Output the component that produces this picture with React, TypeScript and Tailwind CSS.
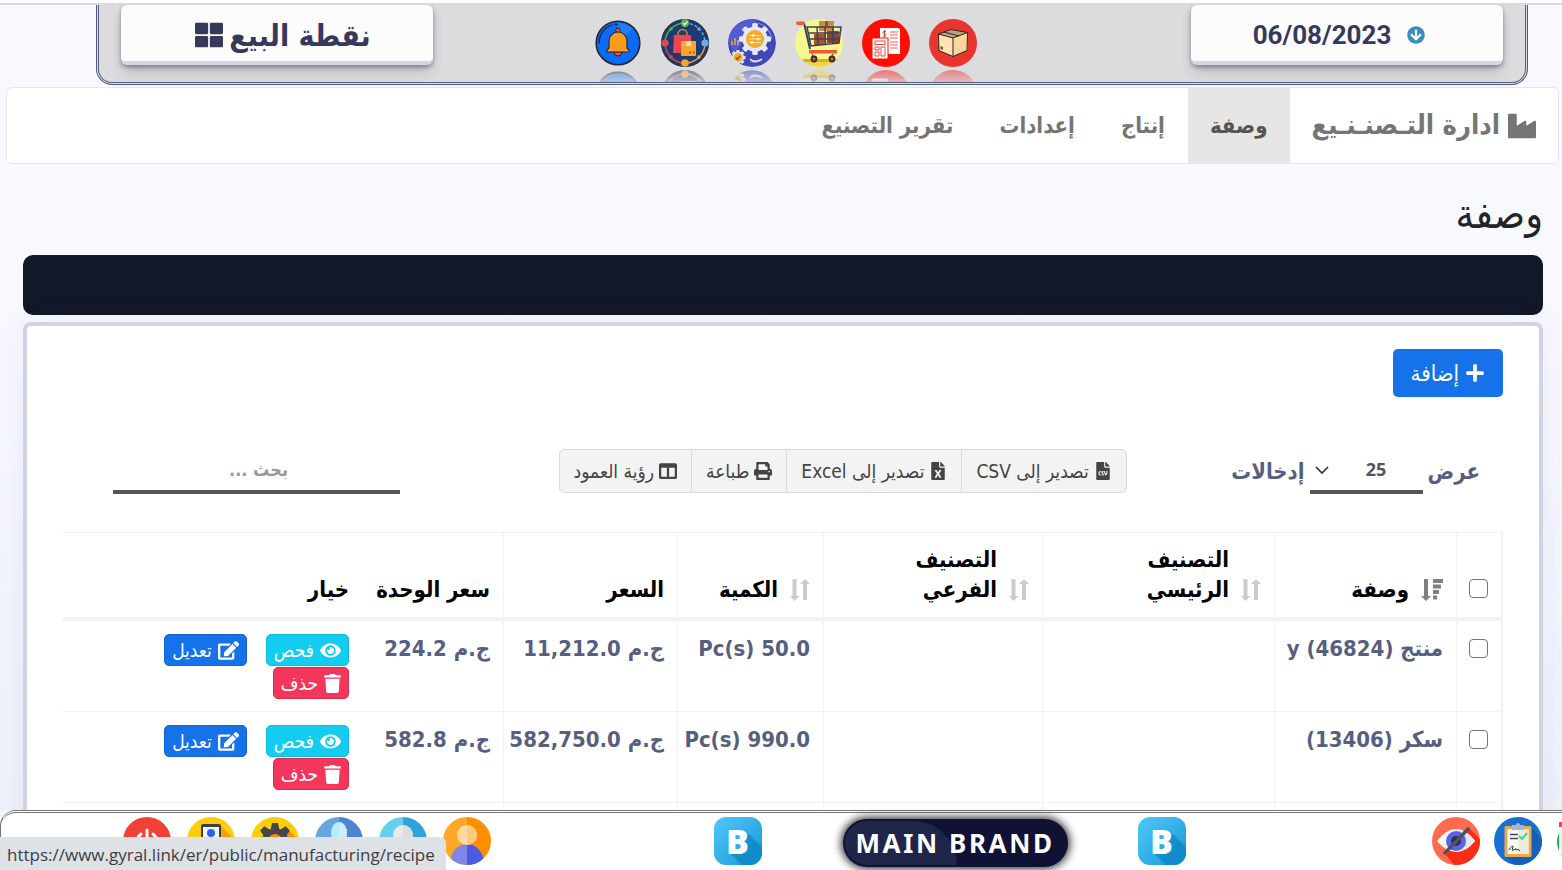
import type { ReactNode } from "react";
import {
  FaIndustry,
  FaThLarge,
  FaPlus,
  FaFileCsv,
  FaFileExcel,
  FaPrint,
  FaColumns,
  FaEye,
  FaEdit,
  FaTrash,
  FaArrowCircleDown,
} from "react-icons/fa";

function Disc({ id, children }: { id: string; children: ReactNode }) {
  return (
    <svg viewBox="0 0 48 48" className="block size-12" aria-hidden="true">
      <clipPath id={id}>
        <circle cx="24" cy="24" r="24" />
      </clipPath>
      <g clipPath={`url(#${id})`}>{children}</g>
    </svg>
  );
}

function BellIcon() {
  return (
    <svg viewBox="0 0 48 48" className="block size-12" aria-hidden="true">
      <circle cx="24" cy="24" r="21.8" fill="#0a6cf5" stroke="#26262e" strokeWidth="1.6" />
      <path d="M24 3 L39 9 L24 24 Z" fill="#2b8bff" opacity=".6" />
      <path d="M5 24 A19 19 0 0 1 18 6" fill="none" stroke="#15223f" strokeWidth="1.3" strokeLinecap="round" />
      <path d="M21 5.3 h2.5" stroke="#15223f" strokeWidth="1.3" strokeLinecap="round" />
      <circle cx="24" cy="11.5" r="2.3" fill="#f0564a" stroke="#26262e" strokeWidth="1" />
      <path d="M20 33 a4 4 0 0 0 8 0z" fill="#f0564a" stroke="#26262e" strokeWidth="1" />
      <path
        d="M15 29 v-7 a9 9 0 0 1 18 0 v7 l2 2 a1.2 1.2 0 0 1 -1 2 H14 a1.2 1.2 0 0 1 -1 -2z"
        fill="#ff9a1a"
        stroke="#26262e"
        strokeWidth="1.2"
      />
    </svg>
  );
}

function ShopCycleIcon() {
  return (
    <Disc id="shop-cycle">
      <circle cx="24" cy="24" r="24" fill="#1d3a73" />
      <circle cx="24" cy="24" r="24" fill="none" stroke="#26385a" strokeWidth="4" />
      <path d="M4 24 A20 20 0 0 1 24 4" fill="none" stroke="#53b04c" strokeWidth="1.4" />
      <path d="M24 4 A20 20 0 0 1 44 24" fill="none" stroke="#6aa8f0" strokeWidth="1.4" strokeDasharray="3 2" />
      <path d="M44 24 A20 20 0 0 1 24 44" fill="none" stroke="#f2a33a" strokeWidth="1.4" />
      <path d="M24 44 A20 20 0 0 1 4 24" fill="none" stroke="#e04a4a" strokeWidth="1.4" />
      <circle cx="24" cy="4" r="4.2" fill="#53b04c" />
      <path d="M22 4 l1.6 1.7 3-3.2" fill="none" stroke="#fff" strokeWidth="1.3" />
      <circle cx="44" cy="24" r="3.6" fill="#6aa8f0" />
      <circle cx="24" cy="44" r="3.8" fill="#f2a33a" />
      <circle cx="4" cy="24" r="3.6" fill="#e04a4a" />
      <circle cx="10" cy="10" r="1.8" fill="#53b04c" />
      <circle cx="38" cy="10" r="1.8" fill="#6aa8f0" />
      <circle cx="38" cy="38" r="1.8" fill="#f2a33a" />
      <circle cx="10" cy="38" r="1.8" fill="#e04a4a" />
      <path d="M17 17 v-2 a4.5 4.5 0 0 1 9 0 v2" fill="none" stroke="#d98a3a" strokeWidth="1.4" />
      <path d="M13 16 H30 L31 34 H12z" fill="#f0454e" />
      <rect x="20" y="22" width="15" height="15" rx="1" fill="#fba62e" />
      <rect x="25" y="22" width="5" height="5" fill="#ffe0a0" />
      <path d="M28 33.5 h2 M32 33.5 h1.5" stroke="#9b5c12" strokeWidth="2" />
    </Disc>
  );
}

function GearsIcon() {
  const spokes = [0, 45, 90, 135];
  return (
    <Disc id="gears">
      <circle cx="24" cy="24" r="24" fill="#4048b8" />
      <path d="M0 20 A24 24 0 0 1 24 0 L30 0 L6 36z" fill="#525bd0" />
      <path d="M30 4 a20 20 0 0 1 14 16 M22 42 q5 3 12 -1" fill="none" stroke="#7f88ea" strokeWidth="1.2" />
      <path d="M22 40 l3 2 q5 1 9 -2" fill="none" stroke="#fff" strokeWidth="1.4" />
      {spokes.map((a) => (
        <rect key={a} x="24.2" y="4" width="5.6" height="32" rx="1.5" fill="#e4e8f2" transform={`rotate(${a} 27 20)`} />
      ))}
      <circle cx="27" cy="20" r="12.6" fill="#e4e8f2" />
      <circle cx="27" cy="20" r="9" fill="#f9a825" />
      <path d="M21 16.5 h12 M21 20 h12 M21 23.5 h12" stroke="#ffe6b0" strokeWidth="1.1" />
      <circle cx="25" cy="16.5" r="1.4" fill="#fff3d6" />
      <circle cx="30" cy="20" r="1.4" fill="#fff3d6" />
      <circle cx="24" cy="23.5" r="1.4" fill="#fff3d6" />
      <path d="M4 26 v-4 M7 26 v-7 M10 26 v-5" stroke="#f3b45a" strokeWidth="1.4" />
      {spokes.map((a) => (
        <rect key={a} x="8.4" y="31" width="3.2" height="15" fill="#dfe3ee" transform={`rotate(${a} 10 38.5)`} />
      ))}
      <circle cx="10" cy="38.5" r="6" fill="#dfe3ee" />
      <circle cx="10" cy="38.5" r="4.4" fill="#f9a825" />
      <path d="M7.7 38.5 l1.7 1.8 3-3.6" fill="none" stroke="#7c4a0e" strokeWidth="1.2" />
    </Disc>
  );
}

function CartIcon() {
  return (
    <svg viewBox="0 0 48 48" className="block size-12" aria-hidden="true">
      <clipPath id="cart">
        <circle cx="24" cy="24" r="24" />
      </clipPath>
      <g clipPath="url(#cart)">
        <rect width="48" height="48" fill="#f4f98c" />
        <rect y="40" width="48" height="8" fill="#f3d24a" />
        <path d="M8 40 h34 v3 h-34z" fill="#d9ae2c" />
      </g>
      <rect x="24" y="2" width="15" height="10" fill="#c98b4a" />
      <rect x="30" y="2" width="3" height="5" fill="#8f5a28" />
      <rect x="19" y="15" width="12" height="11" fill="#a8552c" />
      <rect x="32" y="12" width="12" height="12" fill="#8c4526" />
      <path d="M12 8 H46 L44 24 L16 27z M13 14 H45.5 M15 20 H45 M22 8 L23 26 M30 8 L30.5 25 M38 8 L37.5 25" fill="none" stroke="#3d4160" strokeWidth="1.5" />
      <path d="M9 4 L15 30" fill="none" stroke="#3d4160" strokeWidth="2" />
      <rect x="1" y="2.5" width="9" height="3.4" rx="1.7" fill="#ef5a3c" />
      <rect x="14" y="31" width="28" height="3.4" rx="1" fill="#ef5a3c" />
      <path d="M17 35 l2 4 M38 35 l-2 4" stroke="#c94528" strokeWidth="1.5" />
      <circle cx="19" cy="40" r="3.4" fill="#3a2a2a" />
      <circle cx="19" cy="40" r="1.7" fill="#b8623a" />
      <circle cx="37" cy="40" r="3.4" fill="#3a2a2a" />
      <circle cx="37" cy="40" r="1.7" fill="#b8623a" />
    </svg>
  );
}

function InvoiceIcon() {
  return (
    <Disc id="invoice">
      <rect width="48" height="48" fill="#fb0f06" />
      <path d="M18 9 H36 a2 2 0 0 1 2 2 V35 H18z" fill="#fff" />
      <path d="M24 12.5 q-3 -1 -3 1 q0 1 1.5 1.3 q1.7 .4 1.5 1.7 q-.4 1.5 -3 .6 M22.5 11 v7.5" fill="none" stroke="#e8392f" strokeWidth=".9" />
      <path d="M28 13 h8 M28 16 h8 M28 19 h8 M28 23 h8 M28 26 h8 M28 29 h8" stroke="#e8392f" strokeWidth=".8" />
      <rect x="10" y="19" width="16" height="21" fill="#fff" stroke="#fb0f06" strokeWidth="1" />
      <rect x="13" y="22" width="10" height="3.5" fill="none" stroke="#e8392f" strokeWidth=".9" />
      <path d="M13 28 h4 v3 h-4z M13 33 h4 v4 h-4z M19 28 h4 v9 h-4z" fill="none" stroke="#e8392f" strokeWidth=".9" />
    </Disc>
  );
}

function BoxIcon() {
  return (
    <Disc id="box">
      <rect width="48" height="48" fill="#e8352e" />
      <path d="M24 18 L38.5 13 V31 L24 37.5z" fill="#fbd79c" />
      <path d="M9.5 15 L24 19 V37.5 L10 31.5z" fill="#ffe3b5" />
      <path d="M9.5 15 L22 10.5 L38.5 13.5 L24 19z" fill="#b5a284" />
      <path d="M9.5 15 L22 10.5 L38.5 13.5 L24 19z M9.5 15 L10 31.5 L24 37.5 L38 31.5 L38.5 13.5 M24 19 V37.5 M15 13 L30 17" fill="none" stroke="#2c2622" strokeWidth="1" strokeLinejoin="round" />
      <path d="M11.5 27 l2.5 1 v3 l-2.5 -1z" fill="#6e5a44" />
    </Disc>
  );
}

function PowerIcon() {
  return (
    <Disc id="power">
      <rect width="48" height="48" fill="#f04134" />
      <path d="M18 17 a10 10 0 1 0 12 0 M24 13 V25" fill="none" stroke="#fff" strokeWidth="3" strokeLinecap="round" />
    </Disc>
  );
}

function ContactIcon() {
  return (
    <Disc id="contact">
      <rect width="48" height="48" fill="#fccd0a" />
      <path d="M33 8 L48 23 V48 H14z" fill="#fb9e0c" />
      <rect x="14" y="7" width="20" height="34" rx="2" fill="#3b3f48" />
      <rect x="16" y="10" width="16" height="26" fill="#f2f5ff" />
      <circle cx="24" cy="16" r="4" fill="#2b62e8" />
      <path d="M17.5 27 q0 -6 6.5 -6 q6.5 0 6.5 6z" fill="#2b62e8" />
    </Disc>
  );
}

function SettingsIcon() {
  return (
    <Disc id="settings">
      <rect width="48" height="48" fill="#fccd0a" />
      <path d="M36 11 L48 24 V48 H20z" fill="#fb8c0c" />
      {[0, 45, 90, 135].map((a) => (
        <path key={a} d="M21 6 h6 l1 5 v26 l-1 5 h-6 l-1 -5 v-26z" fill="#45464c" transform={`rotate(${a} 24 24)`} />
      ))}
      <circle cx="24" cy="24" r="13" fill="#45464c" />
      <circle cx="24" cy="24" r="7" fill="#fb8c0c" />
    </Disc>
  );
}

type PersonProps = {
  id: string;
  left: string;
  right: string;
  headLeft: string;
  headRight: string;
  bodyLeft: string;
  bodyRight: string;
  tall?: boolean;
};

function PersonIcon({ id, left, right, headLeft, headRight, bodyLeft, bodyRight, tall }: PersonProps) {
  const half = `${id}-half`;
  const cy = tall ? 16 : 18;
  const rx = tall ? 8 : 10;
  const ry = tall ? 11 : 10;
  return (
    <Disc id={id}>
      <clipPath id={half}>
        <rect x="24" width="24" height="48" />
      </clipPath>
      <rect width="24" height="48" fill={left} />
      <rect x="24" width="24" height="48" fill={right} />
      <ellipse cx="24" cy="47" rx="17" ry="20" fill={bodyLeft} />
      <ellipse cx="24" cy="47" rx="17" ry="20" fill={bodyRight} clipPath={`url(#${half})`} />
      <ellipse cx="24" cy={cy} rx={rx} ry={ry} fill={headLeft} />
      <ellipse cx="24" cy={cy} rx={rx} ry={ry} fill={headRight} clipPath={`url(#${half})`} />
    </Disc>
  );
}

function HiddenEyeIcon() {
  return (
    <Disc id="hidden-eye">
      <rect width="48" height="48" fill="#ff6b4e" />
      <path d="M36 10 L48 22 V48 H22 L14 38z" fill="#fb2d14" />
      <path d="M5 24 Q14 12 24 12 Q34 12 43 24 Q34 35 24 35 Q14 35 5 24z" fill="#f6f7fb" />
      <path d="M24 12 Q34 12 43 24 Q34 35 24 35z" fill="#e4e7f2" />
      <circle cx="24" cy="24" r="10" fill="#5b62e6" />
      <circle cx="24" cy="24" r="5" fill="#2c2f52" />
      <path d="M12 37 L37 11" stroke="#50525e" strokeWidth="3.4" />
    </Disc>
  );
}

function ClipboardIcon() {
  return (
    <Disc id="clipboard">
      <rect width="48" height="48" fill="#1a6fd2" />
      <path d="M37 10 L48 22 V48 H20 L11 39z" fill="#1560b8" />
      <rect x="10.5" y="9" width="27" height="31" rx="1.5" fill="#e9a94c" />
      <rect x="13.5" y="12" width="21" height="25" fill="#fbf8ee" />
      <path d="M24 12 h10.5 v25 h-10.5z" fill="#efecdf" />
      <path d="M18 11 v-3 h4 a2 2 0 0 1 4 0 h4 v5 h-12z" fill="#aab6cc" />
      <path d="M16 17.5 h8 M16 21.5 h8" stroke="#414a60" strokeWidth="1.4" />
      <path d="M25 19 l3 3 5-6" fill="none" stroke="#46d48c" strokeWidth="2" />
      <path d="M15 33 q4 -6 4 -3 q-2 5 1 3 q2 -3 2 0 q2 -2 4 1" fill="none" stroke="#333" strokeWidth="1" />
    </Disc>
  );
}

function ReceiptIcon() {
  return (
    <svg viewBox="0 0 48 48" className="block size-12" aria-hidden="true">
      <circle cx="24" cy="25" r="23" fill="#12b84a" />
      <rect x="3" y="5" width="42" height="5" fill="#f2454e" />
      <rect x="3" y="10" width="42" height="28" fill="#f2f5f3" />
    </svg>
  );
}

function LetterTile() {
  return (
    <a
      href="#brand"
      className="relative flex size-12 shrink-0 items-center justify-center overflow-hidden rounded-xl bg-linear-to-br from-[#4fc9fb] to-[#1096d4] font-['Open_Sans',sans-serif] text-[34px] leading-none font-extrabold text-white"
    >
      <svg viewBox="0 0 48 48" className="absolute inset-0 size-12" aria-hidden="true">
        <path d="M34 16 L48 30 V48 H28 L16 36 L30 34z" fill="#0c86c4" opacity=".75" />
      </svg>
      <span className="relative">B</span>
    </a>
  );
}

function SortIcon() {
  return (
    <svg viewBox="0 0 20 24" className="mb-[3px] h-6 w-5 shrink-0" fill="#cbcbcb" aria-hidden="true">
      <path d="M2.5 1 h4 v17 h3 L4.5 23 L0 18 h2.5z" />
      <path d="M13 22 h4 V6 h3 L15 1 L10 6 h3z" />
    </svg>
  );
}

function SortDescIcon() {
  return (
    <svg viewBox="0 0 22 24" className="mb-[3px] h-6 w-[22px] shrink-0" fill="#808080" aria-hidden="true">
      <path d="M3 1 h4 v17 h3 L5 23 L0 18 h3z" />
      <path d="M12 1 h10 v4 H12z M12 6.5 h8 v4 h-8z M12 12 h6 v4 h-6z M12 17.5 h4 v4 h-4z" />
    </svg>
  );
}

const shortcuts = [
  { label: "المخزون", icon: <BoxIcon /> },
  { label: "الفواتير", icon: <InvoiceIcon /> },
  { label: "المشتريات", icon: <CartIcon /> },
  { label: "التصنيع", icon: <GearsIcon /> },
  { label: "الطلبات", icon: <ShopCycleIcon /> },
  { label: "الإشعارات", icon: <BellIcon /> },
];

const dock = [
  { label: "Log out", icon: <PowerIcon /> },
  { label: "Contacts", icon: <ContactIcon /> },
  { label: "Settings", icon: <SettingsIcon /> },
  {
    label: "Customers",
    icon: <PersonIcon id="customers" left="#64a7df" right="#4c86d2" headLeft="#b9ecfb" headRight="#cdeffd" bodyLeft="#ffffff" bodyRight="#e6e6ee" tall />,
  },
  {
    label: "Suppliers",
    icon: <PersonIcon id="suppliers" left="#66d0e8" right="#2fa3dc" headLeft="#e9e9ee" headRight="#dcdce4" bodyLeft="#ffffff" bodyRight="#e6e6ee" />,
  },
  {
    label: "Profile",
    icon: <PersonIcon id="profile" left="#ffa726" right="#ff8f00" headLeft="#ffd9a0" headRight="#ffca80" bodyLeft="#7f86ea" bodyRight="#4b5be0" />,
  },
];

const exportButtons = [
  { label: "تصدير إلى CSV", icon: <FaFileCsv className="size-[18px]" /> },
  { label: "تصدير إلى Excel", icon: <FaFileExcel className="size-[18px]" /> },
  { label: "طباعة", icon: <FaPrint className="size-[18px]" /> },
  { label: "رؤية العمود", icon: <FaColumns className="size-[18px]" /> },
];

const rows = [
  { name: "منتج (46824) y", qty: "50.0", price: "11,212.0", unit: "224.2" },
  { name: "سكر (13406)", qty: "990.0", price: "582,750.0", unit: "582.8" },
];

const topCard =
  "flex h-[60px] w-[312px] shrink-0 items-center justify-center rounded-md border-b-4 border-[#d6d6e7] bg-[#fcfcfd] pt-1 text-[#36395a] shadow-[0_2px_4px_rgba(45,35,66,0.4),0_7px_13px_-3px_rgba(45,35,66,0.3)]";
const cell = "border-e border-[#f2f2f3] px-[13px] pb-3 text-start";
const tickBox = "block size-[19px] appearance-none rounded-[4px] border border-[#767676] bg-white checked:bg-[#1572e8]";
const actionButton = "inline-flex h-8 items-center gap-[6px] rounded-[5px] border px-[7px] text-[19px] text-white";

export default function App() {
  return (
    <div dir="rtl" className="flex h-screen flex-col bg-[#f3f5fb] font-['DejaVu_Sans_Condensed','DejaVu_Sans',sans-serif]">
      <main className="flex-1 overflow-x-hidden overflow-y-auto bg-linear-to-b from-[#f8f9ff] from-40% to-[#eef1f8] [scrollbar-width:none]">
        <div className="h-[5px] border-b-2 border-[#d9d9db] bg-white" />
        <header className="ms-[34px] me-24 flex h-20 items-start overflow-hidden rounded-b-2xl border-3 border-t-0 border-double border-[#555d80] bg-[#dcdcde] px-[22px]">
          <button type="button" className={`${topCard} gap-4 pr-4 font-['Roboto',sans-serif] text-[26px] font-bold`}>
            <FaArrowCircleDown className="size-[18px] text-[#3c8dbc]" />
            <span>06/08/2023</span>
          </button>
          <nav className="flex flex-1 justify-center gap-[19px] pt-[14px] pr-[53px]">
            {shortcuts.map((s) => (
              <a
                key={s.label}
                href="#shortcut"
                aria-label={s.label}
                className="block size-12 [-webkit-box-reflect:below_3px_linear-gradient(transparent_60%,rgba(255,255,255,0.5))]"
              >
                {s.icon}
              </a>
            ))}
          </nav>
          <button type="button" className={`${topCard} gap-[6px] pl-3 text-[30px] font-bold`}>
            <span>نقطة البيع</span>
            <FaThLarge className="size-7" />
          </button>
        </header>

        <nav className="mt-[2px] mr-[3px] ml-[6px] flex h-[77px] items-stretch rounded-md border border-[#e3e5ef] bg-white text-[22px] font-bold text-[#757575]">
          <a href="#manufacturing" className="flex items-center gap-2 px-[22px] text-[27px]">
            <FaIndustry className="size-7" />
            <span>ادارة التـصنـنـيع</span>
          </a>
          <a href="#recipe" className="flex items-center bg-[#e6e6e6] px-[22px] text-[#555]">وصفة</a>
          <a href="#production" className="flex items-center px-[23px]">إنتاج</a>
          <a href="#settings" className="flex items-center px-[23px]">إعدادات</a>
          <a href="#report" className="flex items-center px-[23px]">تقرير التصنيع</a>
        </nav>

        <div className="ms-[19px] me-[23px]">
          <h1 className="pt-[26px] pb-[17px] text-[41px] leading-12 text-[#212529]">وصفة</h1>
          <div className="h-[60px] rounded-[10px] bg-[#111827]" />
          <section className="mt-[7px] rounded-lg border-4 border-[#d1d4e0] bg-white px-9 pt-[23px] shadow-[0_0_30px_rgba(80,90,160,0.08)]">
            <button type="button" className="flex h-12 items-center gap-[6px] rounded-[5px] bg-[#1572e8] px-[18px] text-[22px] text-white">
              <FaPlus className="size-5" />
              <span>إضافة</span>
            </button>

            <div className="mt-[51px] flex items-center justify-between pr-[23px] pl-[50px]">
              <label className="flex items-center gap-[5px] text-[22px] font-bold text-[#575f80]">
                <span>عرض</span>
                <span className="relative">
                  <select
                    defaultValue="25"
                    className="h-[46px] w-[113px] appearance-none border-b-4 border-[#555] bg-transparent pl-5 text-center font-['Noto_Sans',sans-serif] text-[18px] text-[#555] outline-none"
                  >
                    <option>25</option>
                    <option>50</option>
                    <option>100</option>
                  </select>
                  <svg viewBox="0 0 14 8" className="pointer-events-none absolute top-[18px] left-[5px] h-2 w-[14px]" fill="none" stroke="#333" strokeWidth="1.7" aria-hidden="true">
                    <path d="M1 1 L7 7 L13 1" />
                  </svg>
                </span>
                <span>إدخالات</span>
              </label>
              <div className="flex h-11 overflow-hidden rounded-[5px] border border-[#dadada] bg-[#f3f3f3] text-[19px] text-[#444]">
                {exportButtons.map((b) => (
                  <button key={b.label} type="button" className="flex items-center gap-[5px] border-e border-[#dadada] px-[14px] whitespace-nowrap last:border-e-0">
                    {b.icon}
                    <span>{b.label}</span>
                  </button>
                ))}
              </div>
              <input
                type="search"
                aria-label="بحث"
                placeholder="بحث ..."
                className="ms-[54px] h-[46px] w-[287px] border-b-4 border-[#555] bg-transparent pr-3 text-center text-[18px] font-bold outline-none placeholder:text-[#999]"
              />
            </div>

            <table className="mt-[38px] w-full table-fixed border-separate border-spacing-0 text-[22px] leading-[30px] font-bold text-[#575f80]">
              <colgroup>
                <col className="w-[47px]" />
                <col className="w-[182px]" />
                <col className="w-[232px]" />
                <col className="w-[219px]" />
                <col className="w-[146px]" />
                <col className="w-[174px]" />
                <col className="w-[141px]" />
                <col />
              </colgroup>
              <thead className="align-bottom text-black [&_th]:border-t [&_th]:border-b-4 [&_th]:pt-3">
                <tr>
                  <th className={`${cell} border-s-2`}>
                    <input type="checkbox" aria-label="تحديد الكل" className={`${tickBox} mb-[7px]`} />
                  </th>
                  <th className={cell}>
                    <div className="flex items-end gap-3"><SortDescIcon />وصفة</div>
                  </th>
                  <th className={cell}>
                    <div className="flex items-end gap-3 pe-[60px]"><SortIcon /><span>التصنيف<br />الرئيسي</span></div>
                  </th>
                  <th className={cell}>
                    <div className="flex items-end gap-3"><SortIcon /><span>التصنيف<br />الفرعي</span></div>
                  </th>
                  <th className={cell}>
                    <div className="flex items-end gap-3"><SortIcon />الكمية</div>
                  </th>
                  <th className={cell}>السعر</th>
                  <th className={`${cell} border-e-0 whitespace-nowrap`}>سعر الوحدة</th>
                  <th className={`${cell} border-e-0`}>خيار</th>
                </tr>
              </thead>
              <tbody className="align-top [&_td]:border-b [&_td]:pt-[13px]">
                {rows.map((r) => (
                  <tr key={r.name}>
                    <td className={`${cell} border-s-2`}>
                      <input type="checkbox" aria-label={r.name} className={`${tickBox} mt-[5px]`} />
                    </td>
                    <td className={`${cell} whitespace-nowrap`}>{r.name}</td>
                    <td className={cell} />
                    <td className={cell} />
                    <td className={`${cell} whitespace-nowrap`}>
                      <bdi dir="ltr">Pc(s) {r.qty}</bdi>
                    </td>
                    <td className={`${cell} whitespace-nowrap`}>ج.م {r.price}</td>
                    <td className={`${cell} border-e-0 whitespace-nowrap`}>ج.م {r.unit}</td>
                    <td className={`${cell} border-e-0 font-normal`}>
                      <div className="flex flex-col items-start gap-px">
                        <div className="flex gap-[19px]">
                          <button type="button" className={`${actionButton} border-[#12bcd6] bg-[#12cdf0]`}>
                            <FaEye className="size-[21px]" />
                            فحص
                          </button>
                          <button type="button" className={`${actionButton} border-[#1265cf] bg-[#1572e8]`}>
                            <FaEdit className="size-[21px]" />
                            تعديل
                          </button>
                        </div>
                        <button type="button" className={`${actionButton} border-[#d62c50] bg-[#f5365c]`}>
                          <FaTrash className="h-[19px] w-[17px]" />
                          حذف
                        </button>
                      </div>
                    </td>
                  </tr>
                ))}
                <tr className="h-[91px]">
                  <td className={`${cell} border-s-2`} />
                  <td className={cell} />
                  <td className={cell} />
                  <td className={cell} />
                  <td className={cell} />
                  <td className={cell} />
                  <td className={`${cell} border-e-0`} />
                  <td className={`${cell} border-e-0`} />
                </tr>
              </tbody>
            </table>
          </section>
        </div>
      </main>

      <footer dir="ltr" className="relative z-10 flex h-[60px] shrink-0 items-start">
        <div className="absolute inset-0 overflow-hidden rounded-tl-2xl border-t-3 border-l border-double border-[#777] bg-white" />
        <div className="relative flex w-full items-start overflow-x-clip pt-[7px] pl-[123px]">
          <div className="flex shrink-0 gap-4">
            {dock.map((d) => (
              <a key={d.label} href="#dock" aria-label={d.label} className="block size-12">
                {d.icon}
              </a>
            ))}
          </div>
          <div className="flex flex-1 items-start justify-center pr-[24px]">
            <LetterTile />
            <a
              href="#main-brand"
              className="relative mt-[2px] mr-[70px] ml-[81px] flex h-12 w-[225px] items-center justify-center rounded-full bg-[#0f1235] font-['Noto_Sans',sans-serif] text-[26px] font-bold tracking-widest whitespace-nowrap text-white shadow-[0_0_9px_2px_rgba(0,0,0,0.8)]"
            >
              <span className="absolute inset-y-[2px] left-[2px] w-[112px] rounded-l-[22px] rounded-tr-[44px] bg-[#20264a]" />
              <span className="relative">MAIN BRAND</span>
            </a>
            <LetterTile />
          </div>
          <div className="-mr-[42px] flex shrink-0 gap-[14px]">
            <a href="#visibility" aria-label="Visibility" className="block size-12"><HiddenEyeIcon /></a>
            <a href="#tasks" aria-label="Tasks" className="block size-12"><ClipboardIcon /></a>
            <a href="#receipts" aria-label="Receipts" className="block size-12"><ReceiptIcon /></a>
          </div>
        </div>
        <div className="absolute bottom-0 left-0 flex h-[33px] items-center rounded-tr-md bg-[#dee1e6] pt-[2px] pr-[11px] pl-[7px] font-['Open_Sans',sans-serif] text-[17px] text-[#3c4043]">
          https://www.gyral.link/er/public/manufacturing/recipe
        </div>
      </footer>
    </div>
  );
}
